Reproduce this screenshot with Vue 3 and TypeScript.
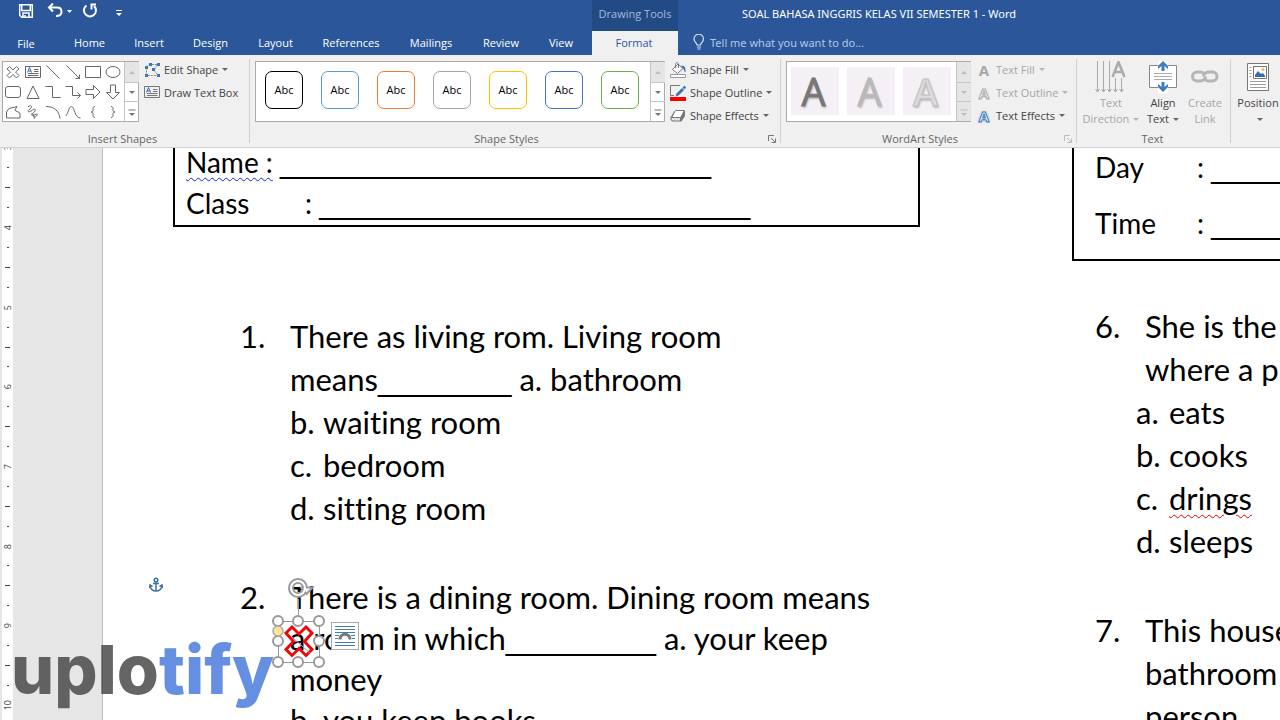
<script setup lang="ts">
import { ref } from 'vue'

interface ShapeIcon { name: string; d: string }

const tabs: string[] = ['File', 'Home', 'Insert', 'Design', 'Layout', 'References', 'Mailings', 'Review', 'View']
const query = ref('')

const shapes: ShapeIcon[] = [
  { name: 'Multiply', d: 'M4.5 2.5 8 6l3.5-3.5 2.5 2.5L10.500 8 14 11.500 11.500 14 8 10.500 4.500 14 2 11.500 5.500 8 2 5z' },
  { name: 'Text box', d: 'M.5 2.500h15v11H.5zM9 5.500h4.500M9 7.500h4.500M3 9.500h10.500M3 11.500h10.500' },
  { name: 'Line', d: 'M1.500 1.500l13 13' },
  { name: 'Arrow', d: 'M1.500 1.500l13 13M14.500 10.500v4h-4' },
  { name: 'Rectangle', d: 'M.5 2.500h15v11H.5z' },
  { name: 'Oval', d: 'M1 8a7 5.500 0 1 0 14 0a7 5.500 0 1 0-14 0z' },
  { name: 'Rounded rectangle', d: 'M3 2.500h10a2.500 2.500 0 0 1 2.500 2.500v6a2.500 2.500 0 0 1-2.500 2.500H3A2.500 2.500 0 0 1 .5 11V5A2.500 2.500 0 0 1 3 2.500z' },
  { name: 'Triangle', d: 'M8 2l6 12.500H2z' },
  { name: 'Elbow connector', d: 'M.5 2.500h7v11h8' },
  { name: 'Elbow arrow', d: 'M.5 2.500h7v9h8M12.500 8.500l3 3-3 3' },
  { name: 'Right arrow', d: 'M1 5.500h7.500V1.500L15 8l-6.500 6.500v-4H1z' },
  { name: 'Down arrow', d: 'M5.500 1v7.500H1.500L8 15l6.500-6.500h-4V1z' },
  { name: 'Freeform', d: 'M4 4.500 12 2.500l-2 3.500c0 2 5 1 5 4v4H1.500V8z' },
  { name: 'Scribble', d: 'M3 3c3-3 5 0 2 2S3 9 6 7s5-3 4 0-6 3-3 4 6-3 5 0-4 2-4 0 2 4 1 4' },
  { name: 'Arc', d: 'M1 2.500c8 0 13 4 14 12' },
  { name: 'Curve', d: 'M.5 12c3-2 3-9.500 6-9.500s3 11.500 9 11.500' },
  { name: 'Left brace', d: 'M10 2.500c-4 0 0 5.500-4 5.500 4 0 0 5.500 4 5.500' },
  { name: 'Right brace', d: 'M6 2.500c4 0 0 5.500 4 5.500-4 0 0 5.500-4 5.500' },
]

const outlineStyles: string[] = ['black', 'sky', 'orange', 'gray', 'gold', 'blue', 'green']
const wordArt: string[] = ['dark', 'mid', 'light']
const scrollGlyphs: string[] = ['M4 9l3-3 3 3z', 'M4 6l3 3 3-3z', 'M3.500 4.500h7v1h-7zM4 8l3 3 3-3z']
const rulerMarks: number[] = [3, 4, 5, 6, 7, 8, 9, 10]
const handles: number[][] = [[6, 48], [26, 48], [47, 48], [6, 68], [47, 68], [6, 89], [26, 89], [47, 89]]
const blank = (n: number): string => '_'.repeat(n)
</script>

<template>
  <div class="window">
    <header class="top">
      <div class="quick">
        <button aria-label="Save">
          <svg width="16" height="16" viewBox="0 0 16 16" fill="none" stroke="#fff" stroke-width="1.500"><path d="M1.700 1.700h12.600v12.600H3.700l-2-2z" /><path d="M3.700 2v5.500h8.600V2" /><path d="M5 14v-4h6v4" /><path d="M7 12v2" /></svg>
        </button>
        <button aria-label="Undo">
          <svg width="16" height="16" viewBox="0 0 16 16" fill="none" stroke="#fff" stroke-width="2"><path d="M6 .5 2 4.500l4 4M2.500 4.500H10c3 0 4.500 2 4.500 4.300S12.500 13 9 13" /></svg>
        </button>
        <svg class="caret" width="5" height="3" viewBox="0 0 5 3"><path d="M0 0h5L2.500 3z" fill="#fff" /></svg>
        <button aria-label="Repeat">
          <svg width="16" height="16" viewBox="0 0 16 16" fill="none" stroke="#fff" stroke-width="2"><path d="M4.500 2.500A6 6 0 1 0 12 3" /><path d="M14 1.500H9.500v5" /></svg>
        </button>
        <button class="customize" aria-label="Customize toolbar">
          <svg width="6" height="6" viewBox="0 0 6 6" fill="#fff"><path d="M0 0h6v1H0zM0 3h6L3 6z" /></svg>
        </button>
      </div>
      <div class="context">Drawing Tools</div>
      <div class="title">SOAL BAHASA INGGRIS KELAS VII SEMESTER 1 - Word</div>
      <nav class="tabs">
        <button v-for="t in tabs" :key="t">{{ t }}</button>
      </nav>
      <button class="active-tab">Format</button>
      <label class="tell">
        <svg width="12" height="16" viewBox="0 0 12 16" fill="none" stroke="#d5e0f2" stroke-width="1.200"><path d="M4 11c0-2-3-3-3-6a4.700 4.700 0 0 1 9.500 0c0 3-3 4-3 6zM4 13h4M4.500 15h3" /></svg>
        <input v-model="query" aria-label="Tell me what you want to do" placeholder="Tell me what you want to do..." />
      </label>
    </header>

    <section class="ribbon">
      <div class="group insert">
        <div class="body">
          <div class="gallery">
            <div class="shape-grid">
              <button v-for="s in shapes" :key="s.name" :aria-label="s.name">
                <svg width="16" height="16" viewBox="0 0 16 16" fill="none" stroke="#666"><path :d="s.d" /><path v-if="s.name === 'Text box'" d="M2.500 8.500l2-5 2 5M3.500 7h2.500" stroke="#2b6cb8" /></svg>
              </button>
            </div>
            <div class="scroll">
              <button v-for="(g, i) in scrollGlyphs" :key="g" :class="{ off: i === 0 }" aria-label="Scroll shapes"><svg width="14" height="14" viewBox="0 0 14 14"><path :d="g" /></svg></button>
            </div>
          </div>
          <div class="commands">
            <button>
              <svg width="16" height="16" viewBox="0 0 16 16"><path d="M2.500 13.500V5l3-2.500h8L10 8l4 5.500z" fill="none" stroke="#888" stroke-dasharray="2 1" /><path d="M1 4h3v3H1zM5 1h3v3H5zM13 1h3v3h-3zM8 6h3v3H8zM1 12h3v3H1zM13 12h3v3h-3z" fill="#3b76b5" /></svg>
              <span>Edit Shape</span><i class="drop"></i>
            </button>
            <button>
              <svg width="16" height="16" viewBox="0 0 16 16" fill="none" stroke="#777"><path d="M.5 1.500h15v11H.5zM9 4.500h4.500M9 6.500h4.500M3 8.500h10.500M3 10.500h10.500" /><path d="M2.500 7.500l2-5 2 5M3.500 6h2.500" stroke="#2b6cb8" /></svg>
              <span>Draw Text Box</span>
            </button>
          </div>
        </div>
        <div class="caption">Insert Shapes</div>
      </div>

      <div class="group styles">
        <div class="body">
          <div class="gallery">
            <div class="style-row">
              <button v-for="c in outlineStyles" :key="c" :class="c">Abc</button>
            </div>
            <div class="scroll">
              <button v-for="(g, i) in scrollGlyphs" :key="g" :class="{ off: i === 0 }" aria-label="Scroll styles"><svg width="14" height="14" viewBox="0 0 14 14"><path :d="g" /></svg></button>
            </div>
          </div>
          <div class="commands">
            <button>
              <svg width="16" height="16" viewBox="0 0 16 16"><path d="M8 2 2.500 7.500l5 4 5.500-5zM5.500 6V2.500C5.500 0 8.500 0 8.500 2.500V6" fill="#fff" stroke="#777" /><path d="M11 4c3-1 5 1 4.500 6-2-.5-1-3-3-4z" fill="#3b76b5" /><path d="M.5 12.500h15v3H.5z" fill="#fff" stroke="#999" /></svg>
              <span>Shape Fill</span><i class="drop"></i>
            </button>
            <button>
              <svg width="16" height="16" viewBox="0 0 16 16"><path d="M10 .5H.5v10H4" fill="none" stroke="#777" /><path d="M12.500 2.500l2-2 1.500 2-1.500 2zM12 3l2 2-5.500 5.500-3 1 1-3z" fill="#3b76b5" /><path d="M0 12h16v4H0z" fill="#f00" /></svg>
              <span>Shape Outline</span><i class="drop"></i>
            </button>
            <button>
              <svg width="16" height="16" viewBox="0 0 16 16"><path d="M.5 9.500l3.500-6L6 2h8l1 1v5l-3.500 5.500h-9l-2-1.500z" fill="#777" /><path d="M5.500 3h8L10.500 9h-8z" fill="#fff" /><path d="M1.500 10h8.500v2.500H3L1.500 11.500z" fill="#e4e4e4" /></svg>
              <span>Shape Effects</span><i class="drop"></i>
            </button>
          </div>
        </div>
        <div class="caption">Shape Styles</div>
        <button class="launcher" aria-label="Shape format options"><svg width="8" height="8" viewBox="0 0 8 8" fill="none" stroke="#777"><path d="M.5 6V.5H6M3 3l4 4M7.500 3.500v4h-4" /></svg></button>
      </div>

      <div class="group wordart">
        <div class="body">
          <div class="gallery">
            <div class="art-row">
              <button v-for="a in wordArt" :key="a" :class="a" disabled>A</button>
            </div>
            <div class="scroll">
              <button v-for="g in scrollGlyphs" :key="g" class="off" disabled aria-label="Scroll WordArt"><svg width="14" height="14" viewBox="0 0 14 14"><path :d="g" /></svg></button>
            </div>
          </div>
          <div class="commands">
            <button disabled><b class="letter">A</b><span>Text Fill</span><i class="drop"></i></button>
            <button disabled><b class="letter hollow">A</b><span>Text Outline</span><i class="drop"></i></button>
            <button><b class="letter glow">A</b><span>Text Effects</span><i class="drop"></i></button>
          </div>
        </div>
        <div class="caption">WordArt Styles</div>
        <button class="launcher" disabled aria-label="WordArt options"><svg width="8" height="8" viewBox="0 0 8 8" fill="none" stroke="#bbb"><path d="M.5 6V.5H6M3 3l4 4M7.500 3.500v4h-4" /></svg></button>
      </div>

      <div class="group text">
        <div class="body">
          <button class="big direction" disabled>
            <svg width="32" height="32" viewBox="0 0 32 32" fill="none" stroke="#aaa"><path d="M2.500 0v30M8.500 0v30M14.500 0v30M20.500 17v13M26.500 17v13M.5 28l2 3 2-3M6.500 28l2 3 2-3M12.500 28l2 3 2-3M18.500 28l2 3 2-3M24.500 28l2 3 2-3" /><path d="M17.500 16l6-15 6 15M19.500 11h8" stroke-width="2.500" /></svg>
            <span>Text</span><span>Direction<i class="drop"></i></span>
          </button>
          <button class="big align">
            <svg width="32" height="32" viewBox="0 0 32 32" fill="none" stroke="#888"><path d="M2.500 4.500h27v22h-27z" fill="#fff" /><path d="M7 12.500h18M7 15.500h18M7 18.500h18" stroke="#aaa" /><path d="M11 0h10v9H11zM11 21h10v11H11z" fill="#fff" stroke="none" /><path d="M16 0l5 5v3l-3.500-3v5h-3V5L11 8V5zM16 31l5-5v-3l-3.500 3v-5h-3v5L11 23v3z" fill="#3b7dbd" stroke="none" /></svg>
            <span>Align</span><span>Text<i class="drop"></i></span>
          </button>
          <button class="big link" disabled>
            <svg width="32" height="32" viewBox="0 0 32 32" fill="none" stroke="#b5b5b5" stroke-width="3"><path d="M15 12.500c-1-1-2-1.500-3.500-1.500H8a4.500 4.500 0 0 0 0 9h3.500c2.500 0 5-2 5-4.500" /><path d="M16 18.500c1 1 2 1.500 3.500 1.500h4a4.500 4.500 0 0 0 0-9h-4c-2.500 0-5 2-5 4.500" /></svg>
            <span>Create</span><span>Link</span>
          </button>
        </div>
        <div class="caption">Text</div>
      </div>

      <div class="group arrange">
        <div class="body">
          <button class="big position">
            <svg width="32" height="32" viewBox="0 0 32 32" fill="none" stroke="#777"><path d="M5.500 2.500h21v27h-21z" fill="#fff" /><path d="M11.500 5.500h13v12h-13z" fill="#fff" /><path d="M7.500 6.500h2M7.500 9.500h2M7.500 12.500h2M7.500 15.500h2M8 20.500h16M8 23.500h16M8 26.500h16" stroke="#999" /><path d="M13 16v-2l3-4 3 3 2-1 2 3v1z" fill="#2f6fad" stroke="none" /><circle cx="21" cy="8.500" r="1.500" fill="#f0b95b" stroke="none" /></svg>
            <span>Position</span><span><i class="drop"></i></span>
          </button>
        </div>
      </div>
    </section>

    <main class="workspace">
      <aside class="ruler">
        <div class="scale">
          <template v-for="n in rulerMarks" :key="n">
            <span class="num">{{ n }}</span><span class="dot"></span><span class="dash"></span><span class="dot"></span>
          </template>
        </div>
      </aside>
      <article class="page">
        <div class="column first">
          <div class="identity">
            <p><span class="grammar">Name :</span> <span class="blank">{{ blank(25) }}</span></p>
            <p><span class="field">Class</span>: <span class="blank">{{ blank(25) }}</span></p>
          </div>
          <div class="question q1">
            <span class="number">1.</span>
            <div>
              <p>There as living rom. Living room</p>
              <p>means<span class="blank">{{ blank(8) }}</span> a. bathroom</p>
              <p><span class="mark">b.</span>waiting room</p>
              <p><span class="mark">c.</span>bedroom</p>
              <p><span class="mark">d.</span>sitting room</p>
            </div>
          </div>
          <div class="question q2">
            <span class="number">2.</span>
            <div>
              <p>There is a dining room. Dining room means</p>
              <p>a room in which<span class="blank">{{ blank(9) }}</span> a. your keep</p>
              <p>money</p>
              <p><span class="mark">b.</span>you keep books</p>
            </div>
          </div>
        </div>
        <div class="column second">
          <div class="identity">
            <p><span class="field">Day</span>: <span class="blank">{{ blank(8) }}</span></p>
            <p><span class="field">Time</span>: <span class="blank">{{ blank(8) }}</span></p>
          </div>
          <div class="question q6">
            <span class="number">6.</span>
            <div>
              <p>She is the</p>
              <p>where a p</p>
              <div class="options">
                <p><span class="mark">a.</span>eats</p>
                <p><span class="mark">b.</span>cooks</p>
                <p><span class="mark">c.</span><span class="spelling">drings</span></p>
                <p><span class="mark">d.</span>sleeps</p>
              </div>
            </div>
          </div>
          <div class="question q7">
            <span class="number">7.</span>
            <div>
              <p>This house</p>
              <p>bathroom</p>
              <p>person</p>
            </div>
          </div>
        </div>
      </article>

      <svg class="anchor" width="14" height="16" viewBox="0 0 14 16" fill="none" stroke="#3f72a8" stroke-width="1.500"><circle cx="7" cy="3" r="1.800" /><path d="M7 5v9M4 6.500h6M1 8.500C1 12 4 14 7 14s6-2 6-5.500M.5 11l.5-3 2.500 1.500M13.500 11 13 8l-2.500 1.500" /></svg>

      <div class="watermark"><span>uplo</span><span class="tint">tify</span></div>

      <svg class="selection" width="56" height="96" viewBox="0 0 56 96" fill="none">
        <path d="M26.500 26v22M6.500 48.500h41v41h-41z" stroke="#999" />
        <path d="M14 60l6-6 7 7 7-7 6 6-7.500 8.500 7.500 8-6 6-7-7-7 7-6-6 7.500-8z" stroke="#f00808" stroke-width="3" />
        <path d="M21 65l17 15" stroke="#7895c4" />
        <circle cx="26" cy="15" r="7" stroke="#999" stroke-width="6" />
        <path d="M29 14.500h11.500l-6 6.500z" fill="#fff" stroke="#999" stroke-width="2" />
        <circle cx="26" cy="15" r="7" stroke="#fff" stroke-width="2" />
        <circle v-for="(h, i) in handles" :key="i" :cx="h[0]" :cy="h[1]" r="5" fill="#fff" stroke="#999" stroke-width="2" />
        <circle cx="6" cy="58" r="5" fill="#ffe699" stroke="#aaa" stroke-width="1.500" />
      </svg>
      <button class="layout-options" aria-label="Layout options">
        <svg width="20" height="20" viewBox="0 0 20 20" fill="none"><path d="M0 .5h20M0 3.500h20M0 6.500h20M0 16.500h20M0 19.500h20M0 9.500h4M16 9.500h4M0 12.500h3M17 12.500h3" stroke="#4380a9" /><path d="M5 13.500C5 6.500 15 6.500 15 13.500" stroke="#777" stroke-width="3" /></svg>
      </button>
    </main>
  </div>
</template>

<style>
body { margin: 0; }
</style>

<style scoped>
* { box-sizing: border-box; }
.window { height: 100vh; display: flex; flex-direction: column; overflow: hidden; font-family: "Open Sans", "Noto Sans", sans-serif; font-size: 11px; color: #444; background: #fff; }
button { border: 0; padding: 0; margin: 0; background: none; font: inherit; color: inherit; }
p { margin: 0; }
svg { display: block; flex: none; }

.top { display: grid; grid-template-columns: 592px 86px 1fr; grid-template-rows: 31px 24px; background: #2b579a; color: #fff; }
.quick { display: flex; align-items: center; padding: 0 0 9px 18px; }
.quick button + button { margin-left: 13px; }
.quick .caret { margin: 0 10px 0 4px; }
.quick .customize { padding-top: 4px; }
.quick button.customize { margin-left: 18px; }
.context { background: #224a84; color: #a5bbdc; text-align: center; line-height: 28px; }
.title { padding-left: 64px; line-height: 28px; white-space: nowrap; }
.title, .tell { font-family: "Noto Sans", "Open Sans", sans-serif; }
.tabs { display: grid; grid-template-columns: 52px 68px 58px 65px 65px 86px 74px 66px 54px; }
.tabs button { padding-bottom: 2px; }
.tabs button:nth-child(1) { padding-bottom: 0; }
.tabs button:nth-child(2) { padding-left: 7px; }
.active-tab { background: #f0f0f0; color: #2b579a; }
.top .active-tab { padding: 0 2px 2px 0; }
.tell { display: flex; align-items: center; padding: 0 0 2px 15px; gap: 5px; }
.tell input { flex: 1; border: 0; padding: 0; background: none; font: inherit; color: #fff; outline: 0; }
.tell input::placeholder { color: #b4c6e4; opacity: 1; }

.ribbon { display: flex; height: 93px; background: #f0f0f0; border-bottom: 1px solid #d2d2d2; flex: none; padding: 4px 0; }
.group { position: relative; display: flex; flex-direction: column; border-right: 1px solid #d0d0d0; flex: none; }
.body { display: flex; padding-top: 2px; height: 72px; flex: none; }
.caption { text-align: center; color: #666; line-height: 15px; }
.text .caption { padding-right: 2px; }
.insert { width: 250px; padding-left: 2px; }
.insert .caption { padding-right: 6px; }
.styles { width: 531px; padding-left: 5px; }
.styles .caption { padding-right: 22px; }
.wordart { width: 296px; padding-left: 5px; }
.wordart .caption { padding-right: 22px; }
.text { width: 154px; }
.arrange { border: 0; }
.gallery { display: flex; height: 61px; border: 1px solid #ababab; background: #fff; }
.shape-grid { display: grid; grid-template-columns: repeat(6, 20px); grid-template-rows: repeat(3, 20px); width: 121px; }
.shape-grid button { display: grid; place-items: center; }
.scroll { display: grid; grid-template-rows: 20px 19px 20px; width: 14px; border-left: 1px solid #c6c6c6; }
.scroll button { display: grid; place-items: center; fill: #777; }
.scroll button + button { border-top: 1px solid #c6c6c6; }
.scroll .off { background: #e5e5e5; fill: #bbb; }
.commands { display: flex; flex-direction: column; padding-left: 5px; margin-top: -3px; }
.commands button { display: flex; align-items: center; height: 23px; gap: 4px; white-space: nowrap; }
.commands button:disabled, .big:disabled { color: #a6a6a6; }
.drop { display: inline-block; border: 3px solid transparent; border-top-color: currentColor; border-bottom: 0; opacity: 0.8; }
.style-row { display: flex; gap: 18px; padding: 9px 11px 0 9px; }
.style-row button { width: 38px; height: 38px; border: 1px solid; border-radius: 7px; padding-bottom: 1px; color: #000; }
.style-row .black { border-color: #000; }
.style-row .sky { border-color: #5b9bd5; }
.style-row .orange { border-color: #ed7d31; }
.style-row .gray { border-color: #a5a5a5; }
.style-row .gold { border-color: #ffc000; }
.style-row .blue { border-color: #4472c4; }
.style-row .green { border-color: #70ad47; }
.art-row { display: flex; gap: 8px; padding: 5px 5px 0 4px; }
.art-row button { width: 48px; height: 48px; background: #f4f0f5; font-size: 38px; line-height: 48px; padding-right: 3px; text-shadow: 1px 2px 2px #bbb; -webkit-text-stroke: 1px currentColor; }
.art-row .dark { color: #777; }
.art-row .mid { color: #b9b9b9; }
.art-row .light { color: #dcdadd; font-weight: 600; -webkit-text-stroke: 1px #c0bfc0; }
.letter { width: 16px; font-size: 15px; line-height: 20px; text-align: center; color: #a6a6a6; }
.hollow { color: #f0f0f0; -webkit-text-stroke: 1px #aaa; }
.glow { color: #fff; -webkit-text-stroke: 1px #3b76b5; text-shadow: 0 0 3px #7aa7d9; }
.launcher { position: absolute; right: 4px; bottom: 0; }
.big { display: flex; flex-direction: column; align-items: center; line-height: 16px; }
.big svg { margin-bottom: 2px; }
.big .drop { margin: 0 0 2px 4px; }
.direction { width: 68px; }
.align { width: 36px; }
.link { width: 48px; }
.position { width: 54px; }

.workspace { position: relative; flex: 1; min-height: 0; display: flex; overflow: hidden; background: #e6e6e6; }
.ruler { width: 11px; margin-left: 2px; background: #fff; flex: none; overflow: hidden; }
.scale { display: grid; grid-auto-rows: 1fr; height: 637px; margin-top: -10px; color: #444; justify-items: center; align-items: center; }
.num { writing-mode: vertical-rl; transform: rotate(180deg); font-size: 9px; line-height: 11px; }
.dot { width: 2px; height: 1px; background: #444; }
.dash { width: 5px; height: 1px; background: #444; }
.page { flex: 1; min-width: 0; margin-left: 89px; padding-left: 70px; display: flex; gap: 152px; overflow: hidden; background: #fff; border-left: 1px solid #bbb; color: #000; font-family: Lato, "Open Sans", sans-serif; font-size: 31px; font-variant-ligatures: none; white-space: nowrap; }
.column { flex: none; }
.first { width: 747px; }
.second { width: 300px; }
.identity { border: 2px solid #000; border-top: 0; padding-left: 11px; font-size: 28px; }
.first .identity { height: 85px; line-height: 41px; margin-top: -6px; }
.second .identity { height: 122px; line-height: 56px; margin-top: -9px; padding-left: 21px; }
.field { display: inline-block; width: 119px; }
.second .field { width: 102px; }
.blank { font: 30px/1 "Liberation Sans", sans-serif; }
.identity .blank { font-size: 31px; }
.grammar { text-decoration: underline wavy #2222cc 1px; text-underline-offset: 4px; }
.spelling { text-decoration: underline wavy #e00000 1px; text-underline-offset: 4px; }
.question { display: flex; line-height: 43px; }
.number { width: 50px; flex: none; }
.mark { display: inline-block; width: 33px; }
.first .question { padding-left: 67px; }
.second .question { padding-left: 23px; }
.q1 { padding-top: 88px; }
.question.q2 { padding-top: 47px; line-height: 41px; }
.q6 { padding-top: 44px; }
.q7 { padding-top: 46px; }
.options { margin-left: -9px; }

.anchor { position: absolute; left: 149px; top: 429px; }
.watermark { position: absolute; left: 11px; top: 479px; font: 800 68px/84px Inter, sans-serif; color: #444; opacity: 0.82; }
.tint { color: #4478dc; }
.selection { position: absolute; left: 272px; top: 425px; }
.layout-options { position: absolute; left: 331px; top: 474px; width: 28px; height: 28px; display: grid; place-items: center; background: #fff; border: 1px solid #aaa; }
</style>
